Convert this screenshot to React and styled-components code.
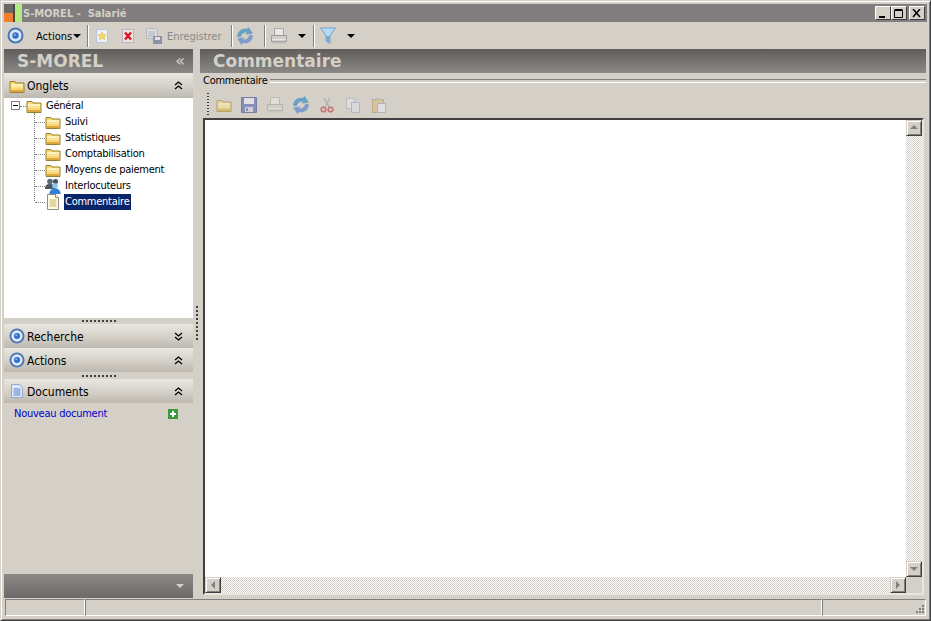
import React from "react";
import styled, { createGlobalStyle, css } from "styled-components";

const Global = createGlobalStyle`
  html, body { margin: 0; padding: 0; background: #d4d0c8; }
  * { box-sizing: border-box; }
`;

const Window = styled.div`
  width: 931px;
  height: 621px;
  overflow: hidden;
  display: flex;
  flex-direction: column;
  background: #d4d0c8;
  padding: 4px;
  border: 1px solid #d4d0c8;
  border-right-color: #404040;
  border-bottom-color: #404040;
  box-shadow: inset 1px 1px 0 #fff, inset -1px -1px 0 #808080;
  font-family: "DejaVu Sans Condensed", "Roboto", sans-serif;
  font-size: 11px;
  letter-spacing: -0.25px;
  color: #000;
`;

const TitleBar = styled.div`
  height: 18px;
  margin: -1px -1px 0 -1px;
  flex: none;
  display: flex;
  align-items: center;
  background: #807e7e;
  padding-right: 2px;
`;

const TitleText = styled.span`
  font-weight: 700;
  color: #d4d0c8;
  margin-left: 1px;
  white-space: pre;
  letter-spacing: 0;
`;

const WinButtons = styled.div`
  margin-left: auto;
  display: flex;
`;

const WinButton = styled.div`
  width: 16px;
  height: 14px;
  margin-left: ${(p) => (p.$gap ? "2px" : "0")};
  background: #d4d0c8;
  border: 1px solid;
  border-color: #fff #404040 #404040 #fff;
  display: flex;
  align-items: center;
  justify-content: center;
`;

const Toolbar = styled.div`
  height: 27px;
  flex: none;
  display: flex;
  align-items: center;
  padding-left: 2px;
`;

const ToolIcon = styled.span`
  display: inline-flex;
  flex: none;
  width: ${(p) => p.$w || 26}px;
  opacity: ${(p) => p.$op || 1};
  justify-content: center;
  align-items: center;
`;

const ToolLabel = styled.span`
  color: ${(p) => (p.$disabled ? "#8a8884" : "#000")};
  margin-left: ${(p) => p.$ml || 0}px;
  width: ${(p) => p.$w}px;
  padding-top: 1px;
  letter-spacing: 0;
  flex: none;
  white-space: nowrap;
`;

const Sep = styled.span`
  width: 2px;
  height: 22px;
  flex: none;
  margin-left: ${(p) => p.$l}px;
  border-left: 1px solid #808080;
  border-right: 1px solid #fff;
`;

const Caret = styled.span`
  width: 0;
  height: 0;
  flex: none;
  margin-left: ${(p) => p.$ml || 0}px;
  border-left: 4px solid transparent;
  border-right: 4px solid transparent;
  border-top: 4px solid #000;
`;

const Body = styled.div`
  flex: 1;
  min-height: 0;
  display: flex;
`;

const Left = styled.div`
  width: 189px;
  flex: none;
  display: flex;
  flex-direction: column;
  margin-left: -1px;
`;

const Splitter = styled.div`
  width: 7px;
  flex: none;
  position: relative;
  &::after {
    content: "";
    position: absolute;
    left: 3px;
    top: 257px;
    width: 2px;
    height: 36px;
    background: repeating-linear-gradient(#404040 0 2px, transparent 2px 4px);
  }
`;

const Right = styled.div`
  flex: 1;
  min-width: 0;
  display: flex;
  flex-direction: column;
`;

const Banner = styled.div`
  height: 24px;
  flex: none;
  display: flex;
  align-items: center;
  background: linear-gradient(#5f5e5c, #8a8986);
  color: #d4d0c8;
  font-family: "DejaVu Sans", sans-serif;
  font-size: 17px;
  font-weight: 700;
  letter-spacing: 0;
  padding-left: 13px;
`;

const BannerChevron = styled.span`
  margin-left: auto;
  margin-right: 8px;
  font-size: 16px;
  font-weight: 400;
  line-height: 1;
`;

const SectionHead = styled.div`
  height: ${(p) => p.$h || 24}px;
  flex: none;
  display: flex;
  align-items: center;
  padding: 0 10px 0 5px;
  background: linear-gradient(#e9e7e2, #d4d0c8 55%, #bdb9b1);
  font-size: 12px;
  letter-spacing: 0;
`;

const SectionName = styled.span`
  margin-left: 2px;
  padding-top: 1px;
`;

const SectionChevrons = styled.span`
  margin-left: auto;
  display: flex;
`;

const TreePane = styled.div`
  height: 220px;
  flex: none;
  background: #fff;
  padding: 0 0 0 8px;
  position: relative;
`;

const TreeRow = styled.div`
  height: 16px;
  display: flex;
  align-items: center;
  padding-left: ${(p) => p.$indent}px;
  position: relative;
  &::before {
    content: "";
    position: absolute;
    left: ${(p) => p.$indent - 10}px;
    top: 8px;
    width: 10px;
    border-top: 1px dotted #808080;
  }
`;

const RootRow = styled(TreeRow)`
  &::before {
    display: none;
  }
`;

const VLine = styled.div`
  position: absolute;
  left: 30px;
  top: 15px;
  height: 88px;
  border-left: 1px dotted #808080;
`;

const Expander = styled.span`
  position: absolute;
  left: -1px;
  top: 3px;
  width: 9px;
  height: 9px;
  border: 1px solid #808080;
  background: #fff;
  &::after {
    content: "";
    position: absolute;
    left: 1px;
    top: 3px;
    width: 5px;
    height: 1px;
    background: #000;
  }
`;

const ExpanderLink = styled.span`
  position: absolute;
  left: 8px;
  top: 8px;
  width: 6px;
  border-top: 1px dotted #808080;
`;

const NodeLabel = styled.span`
  margin-left: 3px;
  padding: 0 2px 0 1px;
  height: 16px;
  line-height: 15px;
  white-space: nowrap;
  ${(p) =>
    p.$selected &&
    css`
      background: #0a246a;
      color: #fff;
    `}
`;

const Grip = styled.div`
  height: ${(p) => p.$h || 6}px;
  flex: none;
  display: flex;
  justify-content: center;
  align-items: center;
  &::after {
    content: "";
    width: 34px;
    height: 2px;
    background: repeating-linear-gradient(90deg, #404040 0 2px, transparent 2px 4px);
  }
`;

const DocBody = styled.div`
  flex: 1;
  display: flex;
  align-items: flex-start;
  justify-content: space-between;
  padding: 3px 15px 0 10px;
`;

const DocLink = styled.span`
  color: #0000cc;
  line-height: 15px;
`;

const DocAdd = styled.span`
  display: flex;
  padding-top: 3px;
`;

const BottomBar = styled.div`
  height: 24px;
  flex: none;
  display: flex;
  align-items: center;
  justify-content: flex-end;
  padding-right: 9px;
  background: linear-gradient(#8a8986, #6c6b69);
`;

const GroupLabel = styled.div`
  height: 15px;
  flex: none;
  display: flex;
  align-items: center;
  margin: 0 0 0 3px;
  line-height: 13px;
  &::after {
    content: "";
    flex: 1;
    margin: 0 0 0 3px;
    height: 2px;
    border-top: 1px solid #808080;
    border-bottom: 1px solid #fff;
  }
`;

const EditToolbar = styled.div`
  height: 30px;
  flex: none;
  display: flex;
  align-items: center;
  padding: 4px 0 0 7px;
  &::before {
    content: "";
    width: 2px;
    height: 24px;
    margin-right: 2px;
    background: repeating-linear-gradient(#404040 0 1px, transparent 1px 3px);
  }
`;

const Editor = styled.div`
  flex: none;
  height: 477px;
  width: 721px;
  margin-left: 3px;
  border: 2px solid;
  border-color: #404040 #e8e6e0 #e8e6e0 #404040;
  display: grid;
  grid-template-columns: 1fr 16px;
  grid-template-rows: 1fr 16px;
  background: #fff;
`;

const TextArea = styled.div`
  background: #fff;
`;

const checker = css`
  background-image: conic-gradient(#fff 25%, #d4d0c8 0 50%, #fff 0 75%, #d4d0c8 0);
  background-size: 2px 2px;
`;

const VTrack = styled.div`
  ${checker}
  display: flex;
  flex-direction: column;
  justify-content: space-between;
`;

const HTrack = styled.div`
  ${checker}
  display: flex;
  justify-content: space-between;
`;

const Corner = styled.div`
  background: #d4d0c8;
`;

const ScrollButton = styled.div`
  width: 16px;
  height: 16px;
  background: #d4d0c8;
  border: 1px solid;
  border-color: #d4d0c8 #404040 #404040 #d4d0c8;
  box-shadow: inset 1px 1px 0 #fff, inset -1px -1px 0 #808080;
  display: flex;
  align-items: center;
  justify-content: center;
`;

const StatusBar = styled.div`
  height: 17px;
  flex: none;
  display: flex;
  margin-top: 1px;
  position: relative;
`;

const StatusCell = styled.div`
  width: ${(p) => (p.$w ? p.$w + "px" : "auto")};
  flex: ${(p) => (p.$w ? "none" : "1")};
  height: 17px;
  border: 1px solid;
  border-color: #808080 #fff #fff #808080;
`;

const GripCorner = styled.svg`
  position: absolute;
  right: 1px;
  bottom: 1px;
`;

const FolderIcon = ({ size = 16 }) => (
  <svg width={size} height={size} viewBox="0 0 16 16">
    <path d="M1 3.5h5l1 1.5h8v9.5H1z" fill="#f6d774" stroke="#9a8235" strokeWidth="1" />
    <path d="M2 6h12v2H2z" fill="#fff2b8" />
    <path d="M2 8h12v2H2z" fill="#fbe594" />
    <path d="M2 12h12v2H2z" fill="#d8a93c" />
  </svg>
);

const DiscIcon = ({ size = 17 }) => (
  <svg width={size} height={size} viewBox="0 0 17 17">
    <circle cx="8.5" cy="8.5" r="7" fill="#dde6f4" stroke="#4a76b8" strokeWidth="2" />
    <circle cx="8.500" cy="8.500" r="3.200" fill="#2f6fd0" />
    <circle cx="7.700" cy="7.700" r="1" fill="#9cc3f5" />
  </svg>
);

const DocIcon = ({ size = 16 }) => (
  <svg width={size} height={size} viewBox="0 0 16 16">
    <path d="M2.5 1.5h8l3 3v10h-11z" fill="#dfe9fa" stroke="#8fa8d0" />
    <path d="M4.5 6h7M4.5 8h7M4.5 10h7M4.5 12h7" stroke="#5c82c4" />
  </svg>
);

const NoteIcon = () => (
  <svg width="16" height="16" viewBox="0 0 16 16">
    <path d="M2.5 0.5h8l3 3v12h-11z" fill="#fffce8" stroke="#8f8f80" />
    <path d="M10.500.5v3h3" fill="#fff" stroke="#8f8f80" />
    <path d="M4.500 6h7M4.500 8h7M4.500 10h7M4.500 12h7" stroke="#c8b060" />
  </svg>
);

const PeopleIcon = () => (
  <svg width="16" height="16" viewBox="0 0 16 16">
    <circle cx="5" cy="3.500" r="2.800" fill="#5c6a78" />
    <circle cx="10.500" cy="3.500" r="2.500" fill="#44525f" />
    <path d="M0 11c0-4 2-5 5-5s6 1 6 5z" fill="#4a5866" />
    <circle cx="10" cy="8" r="2.800" fill="#8ec4f0" />
    <path d="M4.500 16c0-4 2.500-5.500 5.500-5.500s5.500 1.500 5.500 5.500z" fill="#2f7fd6" />
  </svg>
);

const PageStarIcon = () => (
  <svg width="16" height="16" viewBox="0 0 16 16">
    <path d="M2.500 1.500h11v13h-11z" fill="#eef1f8" stroke="#b8c4d8" />
    <path d="M8 4l1.200 2.500 2.800.4-2 1.900.5 2.700L8 10.200l-2.500 1.300.5-2.700-2-1.900 2.800-.4z" fill="#f6d860" stroke="#d8b030" strokeWidth=".5" />
  </svg>
);

const PageCrossIcon = () => (
  <svg width="16" height="16" viewBox="0 0 16 16">
    <path d="M2.500 1.500h11v13h-11z" fill="#eee4e8" stroke="#bcb0bc" />
    <path d="M5 4.500l6 7M11 4.500l-6 7" stroke="#d01820" strokeWidth="2.400" />
  </svg>
);

const SaveAllIcon = () => (
  <svg width="16" height="16" viewBox="0 0 16 16" opacity=".6">
    <path d="M.5.5h9l2 2v8H.5z" fill="#e4e6ee" stroke="#a0a8b8" />
    <path d="M2 4h7M2 6h7M2 8h7" stroke="#8a9ab8" />
    <path d="M7 8h9v8H7z" fill="#5c6a94" />
    <path d="M9 9h5v3H9z" fill="#e8e8f0" />
  </svg>
);

const RefreshIcon = () => (
  <svg width="18" height="18" viewBox="0 0 18 18" opacity=".7">
    <path d="M1 9.500C1.500 4 6 .5 11 2l1.500-2L17 6.500 9.500 7.500l1.300-2C8 5 5.500 6.500 4.500 10.500z" fill="#3b8ec0" />
    <path d="M17 8.500c-.5 5.500-5 9-10 7.500L5.500 18 1 11.500l7.500-1-1.300 2c2.800.5 5.300-1 6.300-5z" fill="#5f86cf" />
  </svg>
);

const PrinterIcon = ({ op = 0.75 }) => (
  <svg width="18" height="18" viewBox="0 0 18 18" opacity={op}>
    <path d="M4.500 1.500h9v7h-9z" fill="#f2f2f2" stroke="#9a9a9a" />
    <path d="M1.500 8.500h15v6h-15z" fill="#cfcfcf" stroke="#8a8a8a" />
    <path d="M2 12h14v1H2z" fill="#eee" />
    <path d="M2.500 14.500h13v2h-13z" fill="#b0b0b0" />
  </svg>
);

const FunnelIcon = () => (
  <svg width="16" height="18" viewBox="0 0 16 18">
    <path d="M.5 1h15L10 8.500v8l-4-2.500V8.500z" fill="#b8d8f4" stroke="#6d9fd0" />
    <path d="M7 9v5l2 1.200V9z" fill="#6d9fd0" />
  </svg>
);

const FloppyIcon = () => (
  <svg width="16" height="16" viewBox="0 0 16 16" opacity=".65">
    <path d="M.5.500h15v15H.5z" fill="#5f6fb4" stroke="#48558f" />
    <path d="M3 1h10v6H3z" fill="#e8e8f0" />
    <path d="M4 10h8v5H4z" fill="#cfd2de" />
    <path d="M5 11h2v3H5z" fill="#5f6fb4" />
  </svg>
);

const ScissorsIcon = () => (
  <svg width="16" height="16" viewBox="0 0 16 16" opacity=".55">
    <path d="M5 1l5 9M11 1L6 10" stroke="#9a9a9a" strokeWidth="1.400" />
    <circle cx="4.500" cy="12.500" r="2.300" fill="none" stroke="#c02828" strokeWidth="1.600" />
    <circle cx="11.500" cy="12.500" r="2.300" fill="none" stroke="#c02828" strokeWidth="1.600" />
  </svg>
);

const CopyIcon = () => (
  <svg width="16" height="16" viewBox="0 0 16 16" opacity=".45">
    <path d="M1.500 1.500h8v10h-8z" fill="#eef0f6" stroke="#9aa6c0" />
    <path d="M6.500 5.500h8v10h-8z" fill="#dfe6f4" stroke="#8a9ac0" />
  </svg>
);

const PasteIcon = () => (
  <svg width="16" height="16" viewBox="0 0 16 16" opacity=".5">
    <path d="M1.500 2.500h11v13h-11z" fill="#dcb878" stroke="#a88a50" />
    <path d="M5 1h4v3H5z" fill="#b0b0b0" />
    <path d="M6.500 6.500h8v9h-8z" fill="#e8eef8" stroke="#8a9ac0" />
  </svg>
);

const PlusIcon = () => (
  <svg width="10" height="10" viewBox="0 0 10 10">
    <path d="M0 0h10v10H0z" fill="#3a9a40" />
    <path d="M4 2h2v2h2v2H6v2H4V6H2V4h2z" fill="#fff" />
  </svg>
);

const Logo = () => (
  <svg width="18" height="18" viewBox="0 0 18 18">
    <path d="M0 0h10v9H0z" fill="#6a6866" />
    <path d="M0 9h10v9H0z" fill="#f08030" />
    <path d="M9 0h2v18H9z" fill="#4a4a48" />
    <path d="M11 0h7v18h-7z" fill="#b4ec84" />
  </svg>
);

const Chevrons = ({ up }) => (
  <svg width="9" height="9" viewBox="0 0 9 9">
    <path
      d={up ? "M1 4l3.500-3L8 4M1 8l3.500-3L8 8" : "M1 1l3.500 3L8 1M1 5l3.500 3L8 5"}
      fill="none"
      stroke="#000"
      strokeWidth="1.300"
    />
  </svg>
);

const Arrow = ({ dir, color = "#808080" }) => {
  const d = { up: "M0 5l4-4 4 4z", down: "M0 2h8l-4 4z", left: "M6 0v8L2 4z", right: "M2 0v8l4-4z" }[dir];
  return (
    <svg width="8" height="8" viewBox="0 0 8 8">
      <path d={d} fill={color} />
    </svg>
  );
};

const Section = ({ icon, name, up, h }) => (
  <SectionHead $h={h}>
    {icon}
    <SectionName>{name}</SectionName>
    <SectionChevrons>
      <Chevrons up={up} />
    </SectionChevrons>
  </SectionHead>
);

const children = [
  { name: "Suivi", icon: <FolderIcon /> },
  { name: "Statistiques", icon: <FolderIcon /> },
  { name: "Comptabilisation", icon: <FolderIcon /> },
  { name: "Moyens de paiement", icon: <FolderIcon /> },
  { name: "Interlocuteurs", icon: <PeopleIcon /> },
  { name: "Commentaire", icon: <NoteIcon />, selected: true },
];

export default function App() {
  return (
    <Window>
      <Global />
      <TitleBar>
        <Logo />
        <TitleText>S-MOREL -  Salarié</TitleText>
        <WinButtons>
          <WinButton>
            <svg width="10" height="9" viewBox="0 0 10 9"><path d="M1 7h6v2H1z" /></svg>
          </WinButton>
          <WinButton>
            <svg width="10" height="9" viewBox="0 0 10 9"><path d="M.5 1.500h8v7h-8zM.5.500h8" fill="none" stroke="#000" /></svg>
          </WinButton>
          <WinButton $gap>
            <svg width="10" height="9" viewBox="0 0 10 9"><path d="M1 0l7 8M8 0L1 8" stroke="#000" strokeWidth="1.500" /></svg>
          </WinButton>
        </WinButtons>
      </TitleBar>
      <Toolbar>
        <DiscIcon />
        <ToolLabel $ml={12} $w={37}>Actions</ToolLabel>
        <Caret />
        <Sep $l={6} />
        <ToolIcon><PageStarIcon /></ToolIcon>
        <ToolIcon><PageCrossIcon /></ToolIcon>
        <ToolIcon><SaveAllIcon /></ToolIcon>
        <ToolLabel $disabled $w={53}>Enregistrer</ToolLabel>
        <Sep $l={11} />
        <ToolIcon $w={24}><RefreshIcon /></ToolIcon>
        <Sep $l={7} />
        <ToolIcon><PrinterIcon /></ToolIcon>
        <Caret $ml={6} />
        <Sep $l={7} />
        <ToolIcon><FunnelIcon /></ToolIcon>
        <Caret $ml={6} />
      </Toolbar>
      <Body>
        <Left>
          <Banner>
            S-MOREL
            <BannerChevron>«</BannerChevron>
          </Banner>
          <Section icon={<FolderIcon />} name="Onglets" up h={25} />
          <TreePane>
            <VLine />
            <RootRow $indent={14}>
              <Expander />
              <ExpanderLink />
              <FolderIcon />
              <NodeLabel>Général</NodeLabel>
            </RootRow>
            {children.map((c) => (
              <TreeRow key={c.name} $indent={33}>
                {c.icon}
                <NodeLabel $selected={c.selected}>{c.name}</NodeLabel>
              </TreeRow>
            ))}
          </TreePane>
          <Grip />
          <Section icon={<DiscIcon size={16} />} name="Recherche" />
          <Section icon={<DiscIcon size={16} />} name="Actions" up />
          <Grip $h={7} />
          <Section icon={<DocIcon />} name="Documents" up />
          <DocBody>
            <DocLink>Nouveau document</DocLink>
            <DocAdd><PlusIcon /></DocAdd>
          </DocBody>
          <BottomBar>
            <Arrow dir="down" color="#d4d0c8" />
          </BottomBar>
        </Left>
        <Splitter />
        <Right>
          <Banner>Commentaire</Banner>
          <GroupLabel>Commentaire</GroupLabel>
          <EditToolbar>
            <ToolIcon $w={25} $op={0.6}><FolderIcon /></ToolIcon>
            <ToolIcon><FloppyIcon /></ToolIcon>
            <ToolIcon><PrinterIcon op={0.4} /></ToolIcon>
            <ToolIcon><RefreshIcon /></ToolIcon>
            <ToolIcon><ScissorsIcon /></ToolIcon>
            <ToolIcon><CopyIcon /></ToolIcon>
            <ToolIcon><PasteIcon /></ToolIcon>
          </EditToolbar>
          <Editor>
            <TextArea />
            <VTrack>
              <ScrollButton><Arrow dir="up" /></ScrollButton>
              <ScrollButton><Arrow dir="down" /></ScrollButton>
            </VTrack>
            <HTrack>
              <ScrollButton><Arrow dir="left" /></ScrollButton>
              <ScrollButton><Arrow dir="right" /></ScrollButton>
            </HTrack>
            <Corner />
          </Editor>
        </Right>
      </Body>
      <StatusBar>
        <StatusCell $w={80} />
        <StatusCell />
        <StatusCell $w={104} />
        <GripCorner width="12" height="12" viewBox="0 0 12 12">
          <path d="M9 2h2v2H9zM6 5h2v2H6zM9 5h2v2H9zM3 8h2v2H3zM6 8h2v2H6zM9 8h2v2H9z" fill="#808080" />
        </GripCorner>
      </StatusBar>
    </Window>
  );
}
